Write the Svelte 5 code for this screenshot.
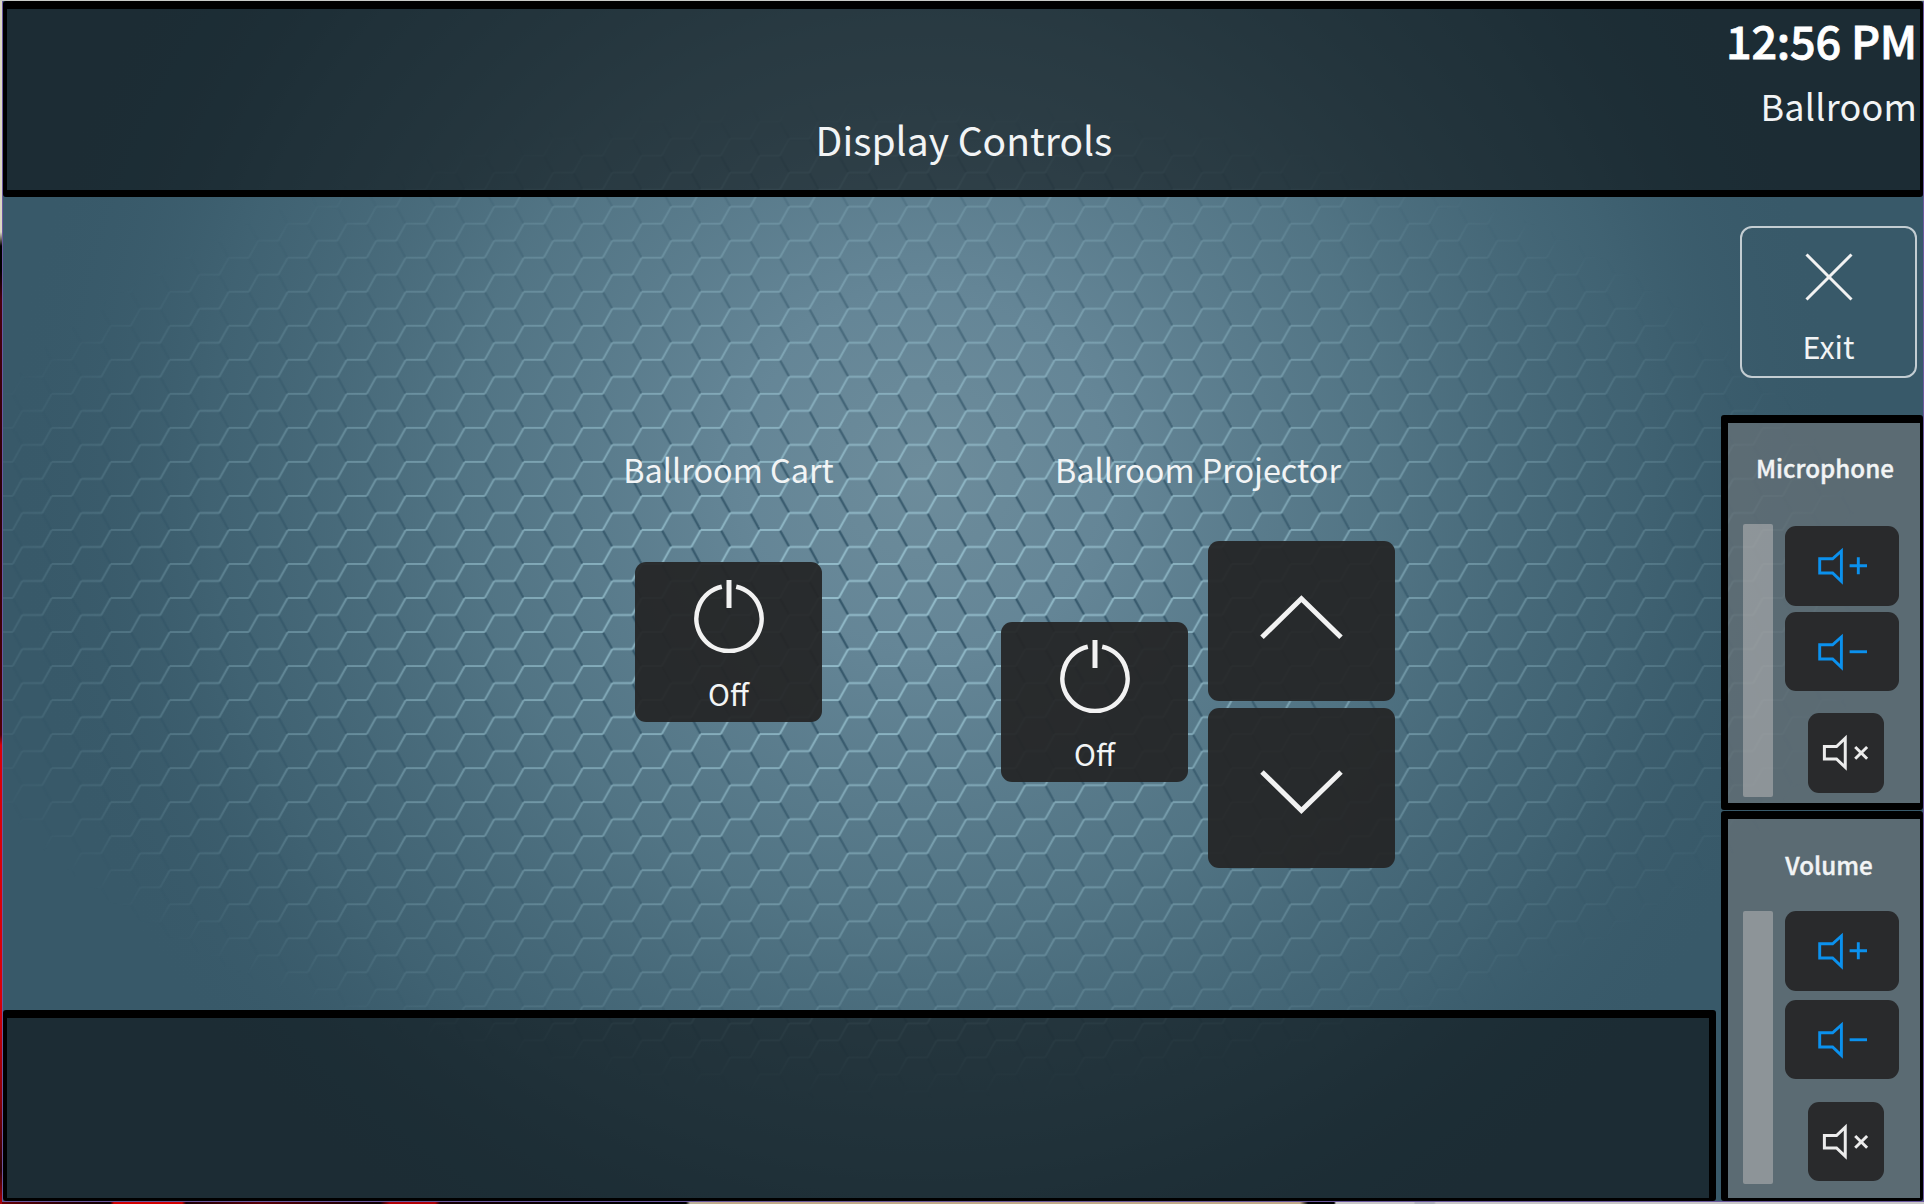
<script>
  const channels = [
    { name: 'Microphone', kind: 'mic' },
    { name: 'Volume', kind: 'vol' }
  ];
</script>

{#snippet speaker(mode)}
  {#if mode === 'mute'}
    <svg class="glyph" viewBox="0 0 76 80">
      <path d="M16 33.7V46.3H28.2L37 54.7V25.3L28.2 33.7Z" />
      <path d="M47 34.2L59 46M59 34.2L47 46" />
    </svg>
  {:else}
    <svg class="glyph" viewBox="0 0 114 79">
      <path d="M34.7 32.5V46.7H47.6L56.4 55.1V24.7L47.6 32.5Z" />
      <path d={mode === 'up' ? 'M64.6 39.5H82M73.3 31V48' : 'M64.6 39.5H82'} />
    </svg>
  {/if}
{/snippet}

{#snippet power()}
  <button class="tile">
    <svg class="power" viewBox="0 0 76 76">
      <path d="M30.8 9.7A32.6 32.6 0 1 0 45.2 9.7" stroke-width="4.6" />
      <path d="M38 3V31" stroke-width="5" />
    </svg>
    <span>Off</span>
  </button>
{/snippet}

<div class="desktop">
  <div class="screen">
    <svg class="backdrop" viewBox="3 1 1920 1200">
      <defs>
        <radialGradient id="glow" gradientUnits="userSpaceOnUse" cx="0" cy="0" r="1" gradientTransform="translate(925 470) scale(920 900)">
          <stop offset="0" stop-color="#6d8c9b" />
          <stop offset="0.2" stop-color="#678899" stop-opacity=".95" />
          <stop offset="0.5" stop-color="#587b8b" stop-opacity=".8" />
          <stop offset="0.78" stop-color="#456878" stop-opacity=".6" />
          <stop offset="1" stop-color="#385969" stop-opacity="0" />
        </radialGradient>
        <radialGradient id="fade" gradientUnits="userSpaceOnUse" cx="0" cy="0" r="1" gradientTransform="translate(890 600) scale(980 500)">
          <stop offset="0" stop-color="#fff" />
          <stop offset="0.25" stop-color="#ddd" />
          <stop offset="0.5" stop-color="#999" />
          <stop offset="0.75" stop-color="#505050" />
          <stop offset="0.9" stop-color="#242424" />
          <stop offset="1" stop-color="#000" />
        </radialGradient>
        <pattern id="hex" patternUnits="userSpaceOnUse" x="641.7" y="493" width="59" height="34.03">
          <g fill="none">
            <path d="M0 3H20M20 37L29.5 20H49.5L59 3M20 2.97L29.5 -14.03M-9.5 20L0 3M59 3H60" stroke="#a0cad8" stroke-opacity=".8" stroke-width="2" />
            <path d="M20.5 3.8L29.3 19.4M50 20.8L57.3 34.03M50 -13.2L58.6 2.4" stroke="#26485c" stroke-opacity=".8" stroke-width="2.2" />
          </g>
        </pattern>
        <mask id="spot"><rect x="0" y="0" width="1924" height="1204" fill="url(#fade)" style:mask-type="luminance" /></mask>
      </defs>
      <rect x="0" y="0" width="1924" height="1204" fill="#385969" />
      <rect x="0" y="0" width="1924" height="1204" fill="url(#glow)" />
      <rect x="0" y="0" width="1924" height="1204" fill="url(#hex)" mask="url(#spot)" />
    </svg>

    <header>
      <span></span>
      <h1>Display Controls</h1>
      <div class="status">
        <strong>12:56 PM</strong>
        <span>Ballroom</span>
      </div>
    </header>

    <div class="body">
      <div class="left">
        <main>
          <section class="cart">
            <h2>Ballroom Cart</h2>
            {@render power()}
          </section>
          <section class="projector">
            <h2>Ballroom Projector</h2>
            <div class="pair">
              {@render power()}
              <div class="lift">
                <button class="tile"><svg class="chev" viewBox="0 0 187 160"><path d="M54 96.3L93.4 57.8L133 96.3" /></svg></button>
                <button class="tile"><svg class="chev" viewBox="0 0 187 160"><path d="M54 64L93.4 102.5L133 64" /></svg></button>
              </div>
            </div>
          </section>
        </main>
        <footer></footer>
      </div>

      <aside>
        <button class="exit">
          <svg viewBox="0 0 48 48"><path d="M1.5 1.5L46.5 46.5M46.5 1.5L1.5 46.5" /></svg>
          <span>Exit</span>
        </button>
        {#each channels as c}
          <section class="channel {c.kind}">
            <h3>{c.name}</h3>
            <div class="controls">
              <div class="slider"></div>
              <div class="keys">
                <button class="key">{@render speaker('up')}</button>
                <button class="key">{@render speaker('down')}</button>
                <button class="key mute">{@render speaker('mute')}</button>
              </div>
            </div>
          </section>
        {/each}
      </aside>
    </div>
  </div>
</div>

<style>
  :global(body) { margin: 0; overflow: hidden; }
  * { box-sizing: border-box; }
  .desktop {
    width: 1924px; height: 1204px; padding: 1px 0 0 2px;
    background:
      linear-gradient(#c9cbc8, #c9cbc8) 0 0 / 100% 1px no-repeat,
      linear-gradient(#dcd8c4 0 232px, #000 246px 270px, #4a0010 300px, #2a0008 500px, #500008 735px, #d80008 745px 1000px, #8a0008 1100px, #2a0004 1170px, #b00008) 0 0 / 2px 100% no-repeat,
      linear-gradient(90deg, #6a0006, #300004 60px, #100002 110px, #d00000 114px 182px, #200004 186px, #5a0006 260px, #100002 380px, #b00004 390px 435px, #180003 440px, #000 640px 686px, #b9b09a 690px, #c0a888 720px 1300px, #000 1308px 1334px, #c8c6c8 1336px 1414px, #aeb0b8 1415px 1434px, #c8c6c8 1436px) 0 100% / 100% 3px no-repeat;
    font-family: "Noto Sans CJK SC", "Noto Sans CJK JP", "Noto Sans", sans-serif;
    color: #f2f4f5;
  }
  .screen {
    position: relative; width: 1922px; height: 1201px;
    border: solid #6a58a0; border-width: 0 1px 1px;
    display: flex; flex-direction: column;
  }
  .backdrop { position: absolute; inset: 0; width: 1920px; height: 1200px; }
  h1, h2, h3 { margin: 0; font-weight: 400; white-space: nowrap; text-align: center; }
  button { font: inherit; color: inherit; border: 0; padding: 0; display: block; }
  svg { display: block; fill: none; stroke: #f2f2f2; }

  header {
    position: relative; height: 196px; flex: none;
    border: solid #000; border-width: 8px 3px 7px 4px; border-radius: 3px;
    background: rgba(0, 0, 0, .5);
    display: grid; grid-template-columns: 1fr auto 1fr;
  }
  h1 { font-size: 39px; line-height: 56px; padding: 102px 0 0 1px; }
  .status { display: flex; flex-direction: column; align-items: flex-end; padding: 1px 3px 0 0; white-space: nowrap; }
  .status strong {
    font-size: 45px; font-weight: 500; line-height: 60px; color: #fff;
    letter-spacing: -.2px; -webkit-text-stroke: .8px #fff;
  }
  .status span { font-size: 36px; letter-spacing: .2px; line-height: 50px; padding-top: 10px; }

  .body { position: relative; flex: 1; display: flex; justify-content: space-between; min-height: 0; }
  .left { width: 1713px; display: flex; flex-direction: column; }
  main { flex: 1; display: flex; padding: 244px 0 0 631.5px; gap: 179px; align-items: flex-start; }
  footer {
    height: 191px; border: solid #000; border-width: 8px 7px 3px 4px; border-radius: 3px;
    background: rgba(0, 0, 0, .5);
  }
  h2 { font-size: 32.4px; line-height: 56px; padding-left: 1px; }
  .cart { width: 187px; display: flex; flex-direction: column; align-items: center; gap: 65px; }
  .projector { width: 394px; display: flex; flex-direction: column; gap: 44px; }
  .pair { display: flex; justify-content: space-between; align-items: center; }
  .pair > .tile { margin-top: -5px; }
  .lift { display: grid; gap: 6.5px; }
  .tile {
    width: 187px; height: 160px; border-radius: 11px; background: rgba(37, 38, 39, .95);
    display: flex; flex-direction: column; align-items: center;
  }
  .power { width: 76px; height: 76px; margin: 15px 0 0 1px; stroke: #f2f2f2; flex: none; }
  .tile span { font-size: 29.5px; line-height: 42px; margin: 19px 0 0 1px; }
  .chev { width: 187px; height: 160px; stroke-width: 5; }

  aside { width: 202px; display: flex; flex-direction: column; }
  .exit {
    width: 177px; height: 152px; margin: 29px 0 37px 18.5px;
    border: 2px solid rgba(230, 234, 236, .8); border-radius: 12px; background: transparent;
    display: flex; flex-direction: column; align-items: center;
  }
  .exit svg { width: 48px; height: 48px; margin: 25px 0 0 1px; stroke-width: 3; }
  .exit span { font-size: 30.5px; line-height: 44px; margin: 23px 0 0 1px; }

  .channel {
    border: solid #000; border-width: 8px 3px 7.5px 7px; border-radius: 3px;
    background: rgba(120, 122, 124, .55);
  }
  .mic { height: 395px; margin-bottom: 1px; }
  .vol { height: 390px; border-bottom-width: 3px; }
  h3 { font-size: 24.2px; font-weight: 500; line-height: 34px; -webkit-text-stroke: .4px currentColor; }
  .mic h3 { padding: 28px 0 39px 2px; }
  .vol h3 { padding: 29px 0 29px 10px; }
  .controls { display: flex; padding-left: 15px; gap: 12px; }
  .slider { width: 30px; height: 273px; border-radius: 2px; background: rgba(192, 190, 190, .5); }
  .keys { display: flex; flex-direction: column; align-items: center; padding-top: 2px; gap: 6px; }
  .vol .keys { padding-top: 0; gap: 9px; }
  .key { width: 114px; height: 79.5px; border-radius: 11px; background: #292a2c; }
  .key.mute { width: 76.5px; margin-top: 16px; margin-left: 8px; }
  .vol .key.mute { margin-top: 13.5px; }
  .glyph { width: 100%; height: 100%; stroke: #0b91ee; stroke-width: 2.9; }
  .mute .glyph { stroke: #ececec; stroke-width: 3; }
</style>
